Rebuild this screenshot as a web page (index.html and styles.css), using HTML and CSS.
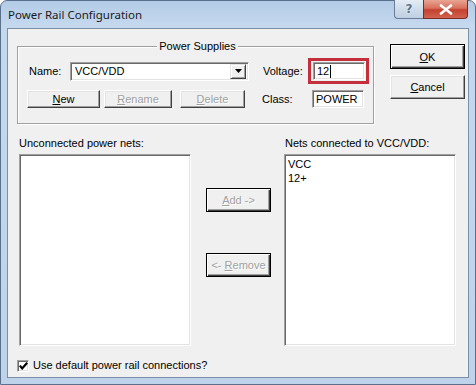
FILE: index.html
```html
<!DOCTYPE html>
<html>
<head>
    <title>Power Rail Configuration</title>
    <link rel="stylesheet" href="styles.css">
</head>
<body>
    <div class="window">
        <div class="titlebar">
            <span class="title">Power Rail Configuration</span>
            <div class="caption-buttons">
                <span class="cap-help">?</span>
                <span class="cap-close">
                    <svg width="14" height="11" viewBox="0 0 14 11"><path d="M2 1.5 L12 9.5 M12 1.5 L2 9.5" stroke="#fff" stroke-width="2.6" stroke-linecap="round"/></svg>
                </span>
            </div>
        </div>

        <div class="client">
            <div class="top">
                <div class="group">
                    <div class="group-title">Power Supplies</div>
                    <div class="row row-name">
                        <span class="label name-label">Name:</span>
                        <div class="combo field">
                            <span class="combo-text">VCC/VDD</span>
                            <span class="combo-arrow"><svg width="7" height="4" viewBox="0 0 7 4"><path d="M0 0 H7 L3.5 4 Z" fill="#000"/></svg></span>
                        </div>
                        <span class="label voltage-label">Voltage:</span>
                        <div class="highlight">
                            <div class="input field">12<span class="caret"></span></div>
                        </div>
                    </div>
                    <div class="row row-buttons">
                        <button class="btn btn-new"><u>N</u>ew</button>
                        <button class="btn btn-rename disabled"><u>R</u>ename</button>
                        <button class="btn btn-delete disabled"><u>D</u>elete</button>
                        <span class="label class-label">Class:</span>
                        <div class="input field">POWER</div>
                    </div>
                </div>

                <div class="actions">
                    <button class="btn btn-default btn-ok"><u>O</u>K</button>
                    <button class="btn btn-cancel"><u>C</u>ancel</button>
                </div>
            </div>

            <div class="lists">
                <div class="list-col">
                    <div class="list-label">Unconnected power nets:</div>
                    <div class="listbox field"></div>
                </div>
                <div class="move-col">
                    <button class="btn btn-default btn-move disabled"><u>A</u>dd -&gt;</button>
                    <button class="btn btn-default btn-move btn-remove disabled">&lt;- <u>R</u>emove</button>
                </div>
                <div class="list-col list-right">
                    <div class="list-label">Nets connected to VCC/VDD:</div>
                    <div class="listbox field">
                        <div class="item">VCC</div>
                        <div class="item">12+</div>
                    </div>
                </div>
            </div>

            <div class="check-row">
                <span class="checkbox field">
                    <svg width="9" height="8" viewBox="0 0 9 8"><path d="M0.8 3.6 L3.2 6.4 L8.2 0.8" stroke="#000" stroke-width="2.2" fill="none"/></svg>
                </span>
                <span>Use default power rail connections?</span>
            </div>
        </div>
    </div>
</body>
</html>
```

FILE: styles.css
```css
body {
    margin: 0;
    font-family: "Liberation Sans", Arial, sans-serif;
    font-size: 11px;
    color: #000;
    background-color: #fff;
}

.window {
    width: 476px;
    height: 385px;
    box-sizing: border-box;
    border: 1px solid #5a6f8c;
    border-radius: 7px 7px 0 0;
    background: linear-gradient(#b3cbe6, #c4d8ee 24px, #bed3ea);
    padding: 0 6px 6px 6px;
    display: flex;
    flex-direction: column;
}

.titlebar {
    height: 27px;
    display: flex;
    align-items: flex-start;
    flex-shrink: 0;
}

.title {
    padding: 6px 0 0 1px;
    font-family: "Noto Sans", "Liberation Sans", sans-serif;
    font-size: 11.5px;
    line-height: 16px;
    color: #1a1a1a;
}

.caption-buttons {
    margin-left: auto;
    margin-right: 1px;
    margin-top: -1px;
    display: flex;
}

.cap-help, .cap-close {
    box-sizing: border-box;
    height: 19px;
    display: flex;
    align-items: center;
    justify-content: center;
    border: 1px solid #6a7d98;
    border-top: none;
}

.cap-help {
    width: 29px;
    border-radius: 0 0 0 4px;
    border-right: none;
    background: linear-gradient(#e4ecf6, #cfdcea 50%, #bfd0e3);
    color: #5d7088;
    font-family: "DejaVu Sans", sans-serif;
    font-weight: bold;
    font-size: 12px;
    text-shadow: 0 0 2px #fff;
}

.cap-close {
    width: 45px;
    border-radius: 0 0 4px 0;
    border-color: #7a2b24;
    background: linear-gradient(#e8a593, #d8705d 45%, #c4412f 55%, #d2634e);
}

.client {
    flex: 1;
    border: 1px solid #7c8fa8;
    background-color: #f0f0f0;
}

/* sunken edit / list border */
.field {
    box-sizing: border-box;
    background-color: #fff;
    border: 1px solid;
    border-color: #a0a0a0 #fff #fff #a0a0a0;
    box-shadow: inset 1px 1px 0 #696969, inset -1px -1px 0 #e3e3e3;
}

.btn {
    box-sizing: border-box;
    margin: 0;
    padding: 0;
    font-family: inherit;
    font-size: 11px;
    color: #000;
    background-color: #f0f0f0;
    border: 1px solid;
    border-color: #fff #404040 #404040 #fff;
    box-shadow: inset -1px -1px 0 #a0a0a0, inset 1px 1px 0 #e3e3e3;
}

.btn-default {
    border: 1px solid #000;
    box-shadow: inset 1px 1px 0 #fff, inset -1px -1px 0 #404040, inset -2px -2px 0 #a0a0a0;
}

.btn.disabled {
    color: #a0a0a0;
    text-shadow: 1px 1px 0 #fff;
}

.top {
    display: flex;
    align-items: flex-start;
    padding: 15px 0 0 9px;
}

.group {
    box-sizing: border-box;
    width: 357px;
    height: 78px;
    margin-top: 2px;
    border: 1px solid #a0a0a0;
    box-shadow: 1px 1px 0 #fff, inset 1px 1px 0 #fff;
}

.group-title {
    display: table;
    margin: -7px auto 0 auto;
    padding: 0 2px;
    line-height: 13px;
    background-color: #f0f0f0;
    position: relative;
    left: 2px;
}

.row {
    display: flex;
    align-items: center;
}

.row-name {
    height: 26px;
    margin-top: 5px;
    padding-left: 11px;
}

.row-buttons {
    height: 20px;
    margin-top: 5px;
    padding-left: 9px;
}

.name-label {
    width: 41px;
}

.combo {
    width: 179px;
    height: 19px;
    display: flex;
    align-items: center;
    padding: 2px;
}

.combo-text {
    flex: 1;
    padding-left: 2px;
}

.combo-arrow {
    box-sizing: border-box;
    width: 16px;
    height: 15px;
    display: flex;
    align-items: center;
    justify-content: center;
    background-color: #f0f0f0;
    border: 1px solid;
    border-color: #e3e3e3 #404040 #404040 #e3e3e3;
    box-shadow: inset 1px 1px 0 #fff, inset -1px -1px 0 #a0a0a0;
}

.voltage-label {
    width: 45px;
    margin-left: 14px;
}

.highlight {
    box-sizing: border-box;
    width: 61px;
    height: 26px;
    border: 3px solid #c3303b;
    padding: 1px 2px;
}

.input {
    width: 52px;
    height: 18px;
    padding: 2px 0 0 3px;
    line-height: 13px;
}

.caret {
    display: inline-block;
    width: 1px;
    height: 13px;
    margin-left: 1px;
    vertical-align: top;
    background-color: #000;
}

.btn-new {
    width: 73px;
    height: 18px;
}

.btn-rename {
    width: 68px;
    height: 18px;
    margin-left: 4px;
}

.btn-delete {
    width: 65px;
    height: 18px;
    margin-left: 8px;
}

.class-label {
    width: 50px;
    margin-left: 17px;
}

.actions {
    display: flex;
    flex-direction: column;
    gap: 6px;
    margin-left: 16px;
}

.btn-ok {
    width: 75px;
    height: 25px;
}

.btn-cancel {
    width: 75px;
    height: 24px;
}

.lists {
    display: flex;
    padding-left: 11px;
}

.list-col {
    width: 172px;
}

.list-label {
    margin-top: 13px;
    line-height: 13px;
}

.listbox {
    height: 192px;
    margin-top: 4px;
    padding: 2px 0 0 3px;
    line-height: 14px;
}

.move-col {
    width: 65px;
    margin-left: 15px;
    padding-top: 64px;
    display: flex;
    flex-direction: column;
}

.btn-move {
    width: 65px;
    height: 24px;
}

.btn-remove {
    margin-top: 41px;
}

.list-right {
    margin-left: 13px;
}

.list-right .list-label {
    padding-left: 1px;
}

.check-row {
    display: flex;
    align-items: center;
    margin-top: 13px;
    padding-left: 9px;
    line-height: 13px;
}

.checkbox {
    width: 12px;
    height: 12px;
    margin-right: 4px;
    display: flex;
    align-items: center;
    justify-content: center;
}
```
